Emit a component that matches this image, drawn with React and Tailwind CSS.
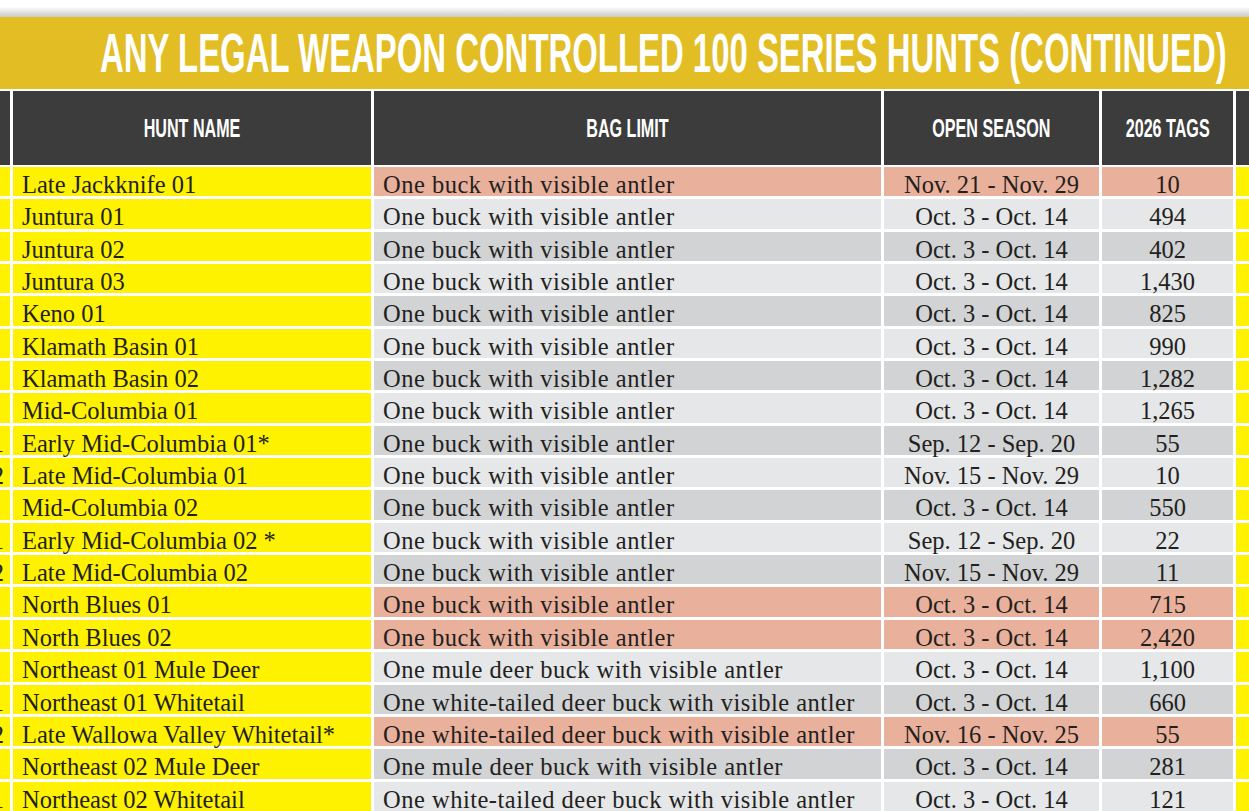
const rows = [
  { name: 'Late Jackknife 01', bag: 'One buck with visible antler', season: 'Nov. 21 - Nov. 29', tags: '10', tone: 's', stub: '' },
  { name: 'Juntura 01', bag: 'One buck with visible antler', season: 'Oct. 3 - Oct. 14', tags: '494', tone: 'l', stub: '' },
  { name: 'Juntura 02', bag: 'One buck with visible antler', season: 'Oct. 3 - Oct. 14', tags: '402', tone: 'd', stub: '' },
  { name: 'Juntura 03', bag: 'One buck with visible antler', season: 'Oct. 3 - Oct. 14', tags: '1,430', tone: 'l', stub: '' },
  { name: 'Keno 01', bag: 'One buck with visible antler', season: 'Oct. 3 - Oct. 14', tags: '825', tone: 'd', stub: '' },
  { name: 'Klamath Basin 01', bag: 'One buck with visible antler', season: 'Oct. 3 - Oct. 14', tags: '990', tone: 'l', stub: '' },
  { name: 'Klamath Basin 02', bag: 'One buck with visible antler', season: 'Oct. 3 - Oct. 14', tags: '1,282', tone: 'd', stub: '' },
  { name: 'Mid-Columbia 01', bag: 'One buck with visible antler', season: 'Oct. 3 - Oct. 14', tags: '1,265', tone: 'l', stub: '' },
  { name: 'Early Mid-Columbia 01*', bag: 'One buck with visible antler', season: 'Sep. 12 - Sep. 20', tags: '55', tone: 'd', stub: '1' },
  { name: 'Late Mid-Columbia 01', bag: 'One buck with visible antler', season: 'Nov. 15 - Nov. 29', tags: '10', tone: 'l', stub: '2' },
  { name: 'Mid-Columbia 02', bag: 'One buck with visible antler', season: 'Oct. 3 - Oct. 14', tags: '550', tone: 'd', stub: '' },
  { name: 'Early Mid-Columbia 02 *', bag: 'One buck with visible antler', season: 'Sep. 12 - Sep. 20', tags: '22', tone: 'l', stub: '1' },
  { name: 'Late Mid-Columbia 02', bag: 'One buck with visible antler', season: 'Nov. 15 - Nov. 29', tags: '11', tone: 'd', stub: '2' },
  { name: 'North Blues 01', bag: 'One buck with visible antler', season: 'Oct. 3 - Oct. 14', tags: '715', tone: 's', stub: '' },
  { name: 'North Blues 02', bag: 'One buck with visible antler', season: 'Oct. 3 - Oct. 14', tags: '2,420', tone: 's', stub: '' },
  { name: 'Northeast 01 Mule Deer', bag: 'One mule deer buck with visible antler', season: 'Oct. 3 - Oct. 14', tags: '1,100', tone: 'l', stub: '' },
  { name: 'Northeast 01 Whitetail', bag: 'One white-tailed deer buck with visible antler', season: 'Oct. 3 - Oct. 14', tags: '660', tone: 'd', stub: '1' },
  { name: 'Late Wallowa Valley Whitetail*', bag: 'One white-tailed deer buck with visible antler', season: 'Nov. 16 - Nov. 25', tags: '55', tone: 's', stub: '2' },
  { name: 'Northeast 02 Mule Deer', bag: 'One mule deer buck with visible antler', season: 'Oct. 3 - Oct. 14', tags: '281', tone: 'd', stub: '' },
  { name: 'Northeast 02 Whitetail', bag: 'One white-tailed deer buck with visible antler', season: 'Oct. 3 - Oct. 14', tags: '121', tone: 'l', stub: '1' },
];

// row fill for the bag / season / tags cells
const toneClass = {
  s: 'bg-[#e9b09b]',
  l: 'bg-[#e6e7e8]',
  d: 'bg-[#d1d3d4]',
};

const cols = 'grid grid-cols-[10px_358px_507px_215px_131px_1fr] gap-x-[3px]';
const cellText = "h-[29.35px] leading-[23px] pt-[6px] text-[24.5px] text-[#231f20] whitespace-nowrap font-['Liberation_Serif',serif]";

function HeadLabel({ children }) {
  return (
    <div className="bg-[#3c3c3c] flex items-center justify-center">
      <span className="inline-block whitespace-nowrap scale-x-[0.62] text-[26px] font-bold text-white font-['Liberation_Sans',sans-serif]">
        {children}
      </span>
    </div>
  );
}

export default function App() {
  return (
    <div className="w-[1249px] h-[811px] overflow-hidden bg-white">
      {/* page edge shadow */}
      <div className="h-[17px] bg-linear-to-b from-white from-40% to-[#c9c9c9]" />

      {/* title band */}
      <div className="h-[72px] bg-[#e2bd23] flex items-center justify-end pr-[22px] overflow-hidden">
        <span className="inline-block whitespace-nowrap origin-right scale-x-[0.5875] text-[56px] leading-none font-bold text-white font-['Liberation_Sans',sans-serif]">
          ANY LEGAL WEAPON CONTROLLED 100 SERIES HUNTS (CONTINUED)
        </span>
      </div>

      {/* column headers */}
      <div className={`${cols} h-[74px] mt-[2px] mb-[2px]`}>
        <div className="bg-[#3c3c3c]" />
        <HeadLabel>HUNT NAME</HeadLabel>
        <HeadLabel>BAG LIMIT</HeadLabel>
        <HeadLabel>OPEN SEASON</HeadLabel>
        <HeadLabel>2026 TAGS</HeadLabel>
        <div className="bg-[#3c3c3c]" />
      </div>

      {/* rows */}
      <div className={`${cols} gap-y-[3px]`}>
        {rows.map((r) => (
          <Row key={r.name} r={r} />
        ))}
      </div>
    </div>
  );
}

function Row({ r }) {
  const tone = toneClass[r.tone];
  return (
    <>
      <div className={`bg-[#fff200] overflow-hidden flex justify-end pr-[6px] ${cellText}`}>
        <span>{r.stub}</span>
      </div>
      <div className={`bg-[#fff200] pl-[9px] ${cellText}`}>{r.name}</div>
      <div className={`${tone} pl-[9px] tracking-[0.5px] ${cellText}`}>{r.bag}</div>
      <div className={`${tone} text-center ${cellText}`}>{r.season}</div>
      <div className={`${tone} text-center ${cellText}`}>{r.tags}</div>
      <div className={`bg-[#fff200] ${cellText}`} />
    </>
  );
}
